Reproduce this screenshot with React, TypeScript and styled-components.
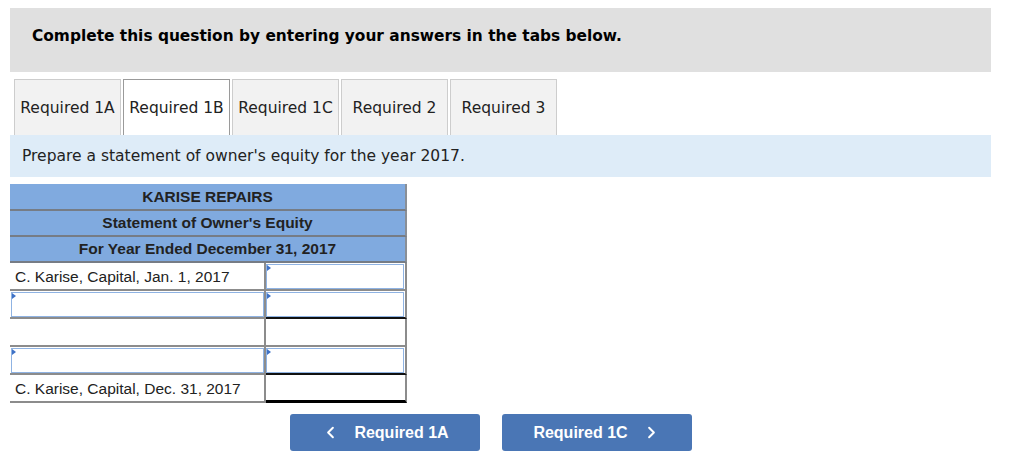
import React, { useState } from 'react';
import styled, { createGlobalStyle } from 'styled-components';
import { ChevronLeft, ChevronRight } from 'lucide-react';

const GlobalStyle = createGlobalStyle`
  html, body {
    margin: 0;
    padding: 0;
    background: #ffffff;
  }
  * {
    box-sizing: border-box;
  }
`;

const TABS = ['Required 1A', 'Required 1B', 'Required 1C', 'Required 2', 'Required 3'];

type Row = {
  label?: string;
  labelInput?: boolean;
  amountInput?: boolean;
  total?: 'single' | 'double';
};

const ROWS: Row[] = [
  { label: 'C. Karise, Capital, Jan. 1, 2017', amountInput: true },
  { labelInput: true, amountInput: true, total: 'single' },
  {},
  { labelInput: true, amountInput: true, total: 'single' },
  { label: 'C. Karise, Capital, Dec. 31, 2017', total: 'double' },
];

function App() {
  const [activeTab, setActiveTab] = useState(1);

  return (
    <>
      <GlobalStyle />
      <S.Page>
        <S.Instructions>Complete this question by entering your answers in the tabs below.</S.Instructions>
        <S.TabRow>
          {TABS.map((tab, i) => (
            <S.Tab key={tab} $active={activeTab === i} onClick={() => setActiveTab(i)}>
              {tab}
            </S.Tab>
          ))}
        </S.TabRow>
        <S.Prompt>Prepare a statement of owner's equity for the year 2017.</S.Prompt>

        <S.Statement>
          <S.HeadRow $height={27}>KARISE REPAIRS</S.HeadRow>
          <S.HeadRow $height={26}>Statement of Owner's Equity</S.HeadRow>
          <S.HeadRow $height={26}>For Year Ended December 31, 2017</S.HeadRow>
          {ROWS.map((row, i) => (
            <S.DataRow key={i}>
              <S.LabelCell>
                {row.labelInput ? <S.EntryBox /> : <S.LabelText>{row.label}</S.LabelText>}
              </S.LabelCell>
              <S.AmountCell $total={row.total}>
                {row.amountInput && <S.EntryBox />}
              </S.AmountCell>
            </S.DataRow>
          ))}
        </S.Statement>

        <S.NavRow>
          <S.NavButton>
            <ChevronLeft size={19} strokeWidth={2.5} />
            <span>Required 1A</span>
          </S.NavButton>
          <S.NavButton>
            <span>Required 1C</span>
            <ChevronRight size={19} strokeWidth={2.5} />
          </S.NavButton>
        </S.NavRow>
      </S.Page>
    </>
  );
}

const S = {
  Page: styled.div`
    width: 1024px;
    padding: 8px 33px 0 10px;
    font-family: 'DejaVu Sans', Verdana, sans-serif;
    color: #111;
  `,
  Instructions: styled.div`
    height: 64px;
    background: #e0e0e0;
    padding: 19px 0 0 22px;
    font-size: 15.4px;
    line-height: 18px;
    font-weight: bold;
    color: #000;
  `,
  TabRow: styled.div`
    display: flex;
    gap: 2px;
    margin-top: 7px;
    padding-left: 4px;
  `,
  Tab: styled.div<{ $active: boolean }>`
    width: 107px;
    height: 56px;
    display: flex;
    align-items: center;
    justify-content: center;
    font-size: 15.5px;
    color: #222;
    cursor: pointer;
    background: ${(p) => (p.$active ? '#ffffff' : '#f2f2f2')};
    border: 1px solid ${(p) => (p.$active ? '#9a9a9a' : '#cdcdcd')};
    border-bottom: none;
    white-space: nowrap;
  `,
  Prompt: styled.div`
    height: 42px;
    background: #deecf8;
    padding-left: 12px;
    display: flex;
    align-items: center;
    font-size: 15.5px;
    color: #222;
  `,
  Statement: styled.div`
    width: 397px;
    margin-top: 7px;
    font-family: 'Liberation Sans', Arial, sans-serif;
    font-size: 15.5px;
    color: #222;
  `,
  HeadRow: styled.div<{ $height: number }>`
    height: ${(p) => p.$height}px;
    background: #80aadf;
    border-bottom: 2px solid #767c85;
    border-right: 2px solid #8a8f96;
    display: flex;
    align-items: center;
    justify-content: center;
    font-weight: bold;
  `,
  DataRow: styled.div`
    display: grid;
    grid-template-columns: 256px 141px;
    height: 28px;
  `,
  LabelCell: styled.div`
    display: flex;
    align-items: stretch;
    padding: 1px 0 0 1px;
    border-bottom: 2px solid #8c8c8c;
    border-right: 2px solid #8c8c8c;
  `,
  LabelText: styled.span`
    display: flex;
    align-items: center;
    padding-left: 4px;
    white-space: nowrap;
  `,
  AmountCell: styled.div<{ $total?: 'single' | 'double' }>`
    display: flex;
    align-items: stretch;
    padding: 1px 1px 0 0;
    border-right: 2px solid #8c8c8c;
    border-bottom: ${(p) =>
      p.$total === 'double' ? '3px solid #000' : p.$total === 'single' ? '2px solid #111' : '2px solid #8c8c8c'};
  `,
  EntryBox: styled.div`
    position: relative;
    flex: 1;
    background: #fff;
    border: 1px solid #8fb3e3;
    &::before {
      content: '';
      position: absolute;
      left: 0;
      top: 0;
      border-top: 3px solid transparent;
      border-bottom: 3px solid transparent;
      border-left: 4px solid #3f72c6;
    }
  `,
  NavRow: styled.div`
    display: flex;
    gap: 22px;
    margin-top: 11px;
    padding-left: 280px;
  `,
  NavButton: styled.button`
    width: 190px;
    height: 37px;
    border: none;
    border-radius: 3px;
    background: #4a76b5;
    color: #fff;
    display: flex;
    align-items: center;
    justify-content: center;
    gap: 14px;
    font-family: 'Liberation Sans', Arial, sans-serif;
    font-size: 16px;
    font-weight: bold;
    cursor: pointer;
  `,
};

export default App;
